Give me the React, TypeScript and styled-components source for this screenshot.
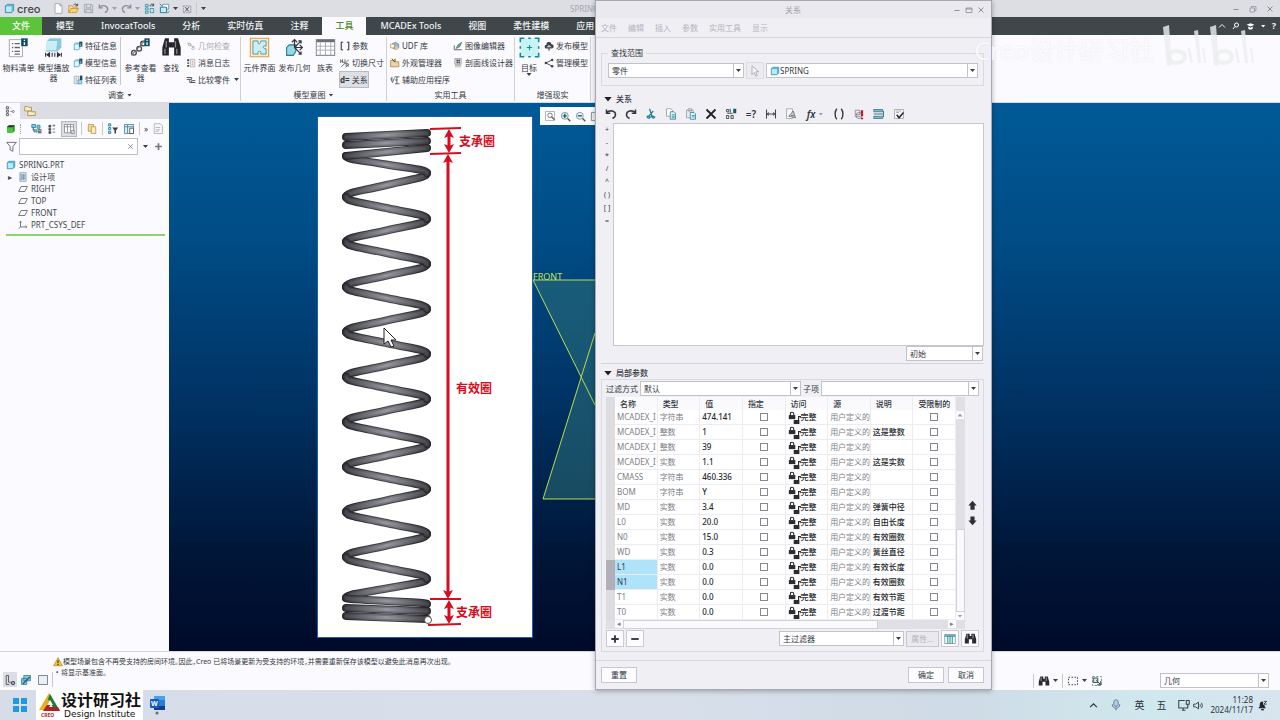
import React from "react";
import styled, { createGlobalStyle } from "styled-components";

interface IconProps {
  name: string;
  size?: number;
}

const DARK = "#3b4248";
const TEAL = "#1b7f96";

const icons: Record<string, React.ReactNode> = {
  cube: (
    <>
      <path d="M2 4l3-2h9v9l-3 3H2z" fill="#59bddb" stroke="#2a7f9e" />
      <path d="M3 5h8v8H3z" fill="#b9ecf8" />
    </>
  ),
  greenCube: (
    <>
      <path d="M2 4l3-2h9v9l-3 3H2z" fill="#2f9a2b" />
      <path d="M2 5h9v9H2z" fill="#4cc43d" />
      <path d="M2 4l3-2h9l-3 3H2z" fill="#333" />
    </>
  ),
  file: <path d="M3 1h7l3 3v11H3zM10 1v3h3" fill="#fff" stroke="#8a8f98" />,
  open: (
    <>
      <path d="M1 14V4h5l1 2h6v3" fill="#f4dc9a" stroke="#b98b2e" />
      <path d="M1 14l3-6h11l-3 6z" fill="#f7d26e" stroke="#b98b2e" />
      <path d="M8 3c2-2 4-2 5 0M14 1v3h-3" fill="none" stroke="#444" strokeWidth="1.4" />
    </>
  ),
  save: <path d="M2 2h11l1 1v11H2zM5 2v5h6V2M4 14V9h8v5" fill="#d4d6dc" stroke="#989ca5" />,
  undo: <path d="M2 6c5-4 12-2 12 3 0 3-2 4-4 5M2 2v5h5" fill="none" stroke="currentColor" strokeWidth="2" />,
  redo: <path d="M14 6C9 2 2 4 2 9c0 3 2 4 4 5M14 2v5H9" fill="none" stroke="currentColor" strokeWidth="2" />,
  regen: (
    <>
      <path d="M2 2h4v3H2zM2 7h4v3H2zM2 12h4v3H2zM9 8h5v6H9z" fill="#bfe8f0" stroke={TEAL} />
      <path d="M9 5c0-4 4-4 5-2M14 1v3h-3" fill="none" stroke={DARK} strokeWidth="1.4" />
    </>
  ),
  windows: (
    <>
      <path d="M5 2h9v7H5z" fill="#fff" stroke="#517a8b" />
      <path d="M2 6h9v8H2z" fill="#c6ebf4" stroke={TEAL} strokeWidth="1.4" />
      <path d="M1 1l3 3M15 12l-3 3" stroke={DARK} />
    </>
  ),
  closeWin: (
    <>
      <path d="M2 3h12v11H2z" fill="none" stroke="#73777f" strokeDasharray="3 1" />
      <path d="M5 5l6 7M11 5l-6 7" stroke="#555" strokeWidth="1.6" />
    </>
  ),
  info: (
    <>
      <path d="M2 5l2-2h7v9l-2 2H2z" fill="#8ed8ea" stroke="#4893a8" />
      <path d="M3 6h6v7H3z" fill="#e0f7fc" />
      <path d="M10 1h5v8h-5z" fill="#0f4f68" />
      <path d="M12 3h1v1h-1zM12 5h1v3h-1z" fill="#fff" />
    </>
  ),
  list: (
    <>
      <path d="M2 2h7v12H2z" fill="#fff" stroke="#848a92" />
      <path d="M4 5h3M4 8h3M4 11h3" stroke="#555" />
      <path d="M8 8h6v6H8z" fill="#a5def0" stroke="#3589a3" />
      <path d="M11 1h4v7h-4z" fill="#0f4f68" />
    </>
  ),
  gearGray: <path d="M2 3l4 1 2 4 5 1M9 12l3-3 2 3-2 2zM3 6l3-3 2 3-2 2z" fill="none" stroke="#b0b3bb" strokeWidth="1.6" />,
  log: (
    <>
      <path d="M2 2h3v3H2zM2 7h3v2H2zM2 11h3v3H2z" fill={DARK} />
      <path d="M7 2h7v12H7z" fill="#fff" stroke="#8d929a" />
      <path d="M9 5h3M9 8h3M9 11h3" stroke="#b3473c" />
    </>
  ),
  compare: <path d="M1 4h8v3H1M6 7v5h9M9 12V9h6" fill="none" stroke="#4c525a" strokeWidth="1.5" />,
  brackets: <path d="M5 2H2v12h3M11 2h3v12h-3" fill="none" stroke={DARK} strokeWidth="1.8" />,
  dims: <path d="M1 2v6M4 2v5h4V2M2 14L14 3M8 9h5v5M10 9v5M1 5h4M9 15l5-5" fill="none" stroke="#51575e" strokeWidth="1.3" />,
  udf: (
    <>
      <path d="M4 4l5-2 5 3v6l-5 3-5-3z" fill="#8fb8df" stroke="#557ba6" />
      <path d="M1 5h6v6H1z" fill="#fff" stroke="#b07b35" />
      <path d="M8 9h5v5H8z" fill="#f1c777" />
    </>
  ),
  appearance: (
    <>
      <path d="M1 4h5l1 2h7v8H1z" fill="#f0d39b" stroke="#8e6f3d" />
      <path d="M3 1l4 5M8 1v5" stroke="#5a4a33" strokeWidth="1.6" />
    </>
  ),
  aux: <path d="M1 5l3 7 3-7M7 3h8M11 3v11M8 14h7M3 3v6M8 8h4" fill="none" stroke="#535960" strokeWidth="1.4" />,
  image: (
    <>
      <path d="M2 7v7h12" fill="none" stroke="#51575e" strokeWidth="1.4" />
      <path d="M5 12l3-6 6-4-3 7z" fill="#69ad9e" stroke="#4b6a68" />
    </>
  ),
  hatch: (
    <>
      <path d="M3 1h10v9H3z" fill="#e6e6ea" stroke="#777" />
      <path d="M5 4h6M5 7h6M7 2v7M10 2v7" stroke="#333" />
      <path d="M3 12h10M3 14h10" stroke="#999" />
    </>
  ),
  cloud: (
    <>
      <path d="M4 12a3 3 0 010-6 4 4 0 018-1 3.500 3.500 0 010 7z" fill={DARK} />
      <path d="M8 15V8M5 10l3-3 3 3" fill="none" stroke="#fff" strokeWidth="1.6" />
      <path d="M8 15v-5" stroke={DARK} strokeWidth="2" />
    </>
  ),
  share: (
    <>
      <path d="M3 8l10-5M3 8l10 5" stroke={DARK} strokeWidth="1.4" />
      <circle cx="3" cy="8" r="2" fill={DARK} />
      <circle cx="13" cy="3" r="2" fill={DARK} />
      <circle cx="13" cy="13" r="2" fill={DARK} />
    </>
  ),
  tree: (
    <>
      <path d="M2 1h3v3H2zM2 6h3v3H2zM2 11h3v3H2z" fill="#fff" stroke="#50565e" strokeWidth="1.3" />
      <path d="M8 8h2M8 3h1M8 13h1" stroke="#50565e" />
      <circle cx="12" cy="8" r="1.500" fill="none" stroke="#50565e" />
    </>
  ),
  folders: <path d="M1 2h4l1 1h4v5H1zM5 8h4l1 1h5v5H5z" fill="#f7eac7" stroke="#b3995a" strokeWidth="1.3" />,
  treeCols: (
    <>
      <path d="M1 2h5v4H1zM4 9h4v3H4zM8 3h4v4H8z" fill="#7fcde0" stroke={TEAL} />
      <path d="M9 9h5M9 11h5M9 13h5M3 6v4" stroke={DARK} strokeWidth="1.3" />
    </>
  ),
  dots: <path d="M3 2h3v3H3zM3 7h3v3H3zM3 12h3v3H3zM9 2h4M9 3h4M9 8h4M9 13h4" fill={DARK} stroke={DARK} />,
  columns: (
    <>
      <path d="M2 2h12v11H2z" fill="#fff" stroke="#7c818b" />
      <path d="M2 5h12M6 2v11M10 2v11" stroke="#7c818b" />
      <path d="M11 10h4v4h-4z" fill="#ddd" stroke="#888" />
    </>
  ),
  model: (
    <>
      <path d="M3 2h7v9H3z" fill="#f7dda1" stroke="#bb8a31" />
      <path d="M7 5h6v9H7z" fill="#fbeccb" stroke="#bb8a31" />
    </>
  ),
  treeFilter: (
    <>
      <path d="M2 1h3v3H2zM2 6h3v3H2zM2 11h3v3H2z" fill="#9bd4e2" stroke={TEAL} />
      <path d="M7 6h8l-3 4v4h-2v-4z" fill={DARK} />
    </>
  ),
  treeList: (
    <>
      <path d="M2 2h12v12H2z" fill="#d4eff5" stroke="#437b8b" />
      <path d="M2 5h12M6 2v12" stroke="#437b8b" />
      <path d="M9 7h5v7H9z" fill="#fff" stroke={DARK} />
    </>
  ),
  page: (
    <>
      <path d="M3 1h8l3 3v10H3z" fill="#f8f8fa" stroke="#a3a6ae" />
      <path d="M5 6h6M5 9h6M5 11h4" stroke="#a3a6ae" />
    </>
  ),
  funnel: <path d="M1 2h14L10 8v7l-4-2V8z" fill="none" stroke="#6d7178" strokeWidth="1.4" />,
  plane: <path d="M5 4h10l-4 8H1z" fill="none" stroke="#596068" strokeWidth="1.3" />,
  csys: <path d="M4 2v9h10M4 11l-3 3M2 4l2-2 2 2M12 9l2 2-2 2" fill="none" stroke="#596068" strokeWidth="1.3" />,
  design: (
    <>
      <path d="M3 1h10v14H3z" fill="#ddeaf2" stroke="#6790aa" />
      <path d="M5 3v10M8 3v10M8 5h4M8 8h4M8 11h4" stroke="#57819b" strokeWidth="1.4" />
    </>
  ),
  zoomFit: (
    <>
      <path d="M2 2h12v12H2z" fill="#fff" stroke="#9ba0a8" />
      <circle cx="8" cy="7" r="3" fill="none" stroke="#555" />
      <path d="M10 9l4 4" stroke="#555" strokeWidth="1.5" />
    </>
  ),
  zoomIn: (
    <>
      <circle cx="7" cy="7" r="5" fill="#e4f4f8" stroke="#60717b" />
      <path d="M4 7h6M7 4v6" stroke="#13657f" strokeWidth="2" />
      <path d="M11 11l4 4" stroke="#555" strokeWidth="2" />
    </>
  ),
  zoomOut: (
    <>
      <circle cx="7" cy="7" r="5" fill="#e4f4f8" stroke="#60717b" />
      <path d="M4 7h6" stroke="#13657f" strokeWidth="2" />
      <path d="M11 11l4 4" stroke="#555" strokeWidth="2" />
    </>
  ),
  cut: <path d="M6 1l3 9M11 4L5 11M3 11a2 2 0 104 1zM9 10a2 2 0 104 2z" fill="none" stroke={TEAL} strokeWidth="1.6" />,
  copy: (
    <>
      <path d="M2 1h6l2 2v8H2z" fill="#fff" stroke="#8d939c" />
      <path d="M7 5h5l2 2v8H7z" fill="#e4f5f9" stroke={TEAL} />
      <path d="M9 9h4M9 11h4M9 13h4" stroke={TEAL} />
    </>
  ),
  paste: (
    <>
      <path d="M2 3h9v10H2zM4 1h5v3H4z" fill="#e9e9ee" stroke="#9297a0" />
      <path d="M7 6h5l2 2v7H7z" fill="#e4f5f9" stroke={TEAL} />
      <path d="M9 10h4M9 12h4" stroke={TEAL} />
    </>
  ),
  del: <path d="M2 2l12 12M14 2L2 14" stroke="#222" strokeWidth="2.400" />,
  dimSwitch: (
    <>
      <path d="M2 2h3v3H2zM2 10h3v4H2zM8 10h3v4H8zM7 1v5M3 7h7" fill="none" stroke="#40464d" strokeWidth="1.2" />
      <path d="M11 1h4v6h-4z" fill="#0f5b64" />
    </>
  ),
  width: <path d="M2 2v12M14 2v12M2 8h12M5 6L3 8l2 2M11 6l2 2-2 2" fill="none" stroke="#40464d" strokeWidth="1.4" />,
  measure: (
    <>
      <path d="M2 1h8v13H2z" fill="#f7f7fa" stroke="#9a9ea6" />
      <path d="M5 11l6-7 3 9zM8 10h4" fill="#c9ccd2" stroke="#5d636b" />
    </>
  ),
  parens: <path d="M5 1c-3 4-3 10 0 14M11 1c3 4 3 10 0 14" fill="none" stroke="#30353b" strokeWidth="1.8" />,
  units: (
    <>
      <path d="M3 3h6v6H3zM2 11h8" fill="#f0f0f4" stroke="#777b84" />
      <circle cx="8" cy="10" r="4" fill="none" stroke="#72767e" />
      <path d="M12 3v8M12 13v2" stroke="#b91c31" strokeWidth="3" />
    </>
  ),
  lines: (
    <>
      <path d="M1 2h12v3H1zM1 11h12v3H1z" fill="#67bfcb" stroke="#41727d" />
      <path d="M1 8h13V4M14 8v4" fill="none" stroke="#41727d" strokeWidth="1.3" />
    </>
  ),
  verify: (
    <>
      <path d="M2 2h12v12H2z" fill="#f7f7fa" stroke="#9a9ea6" />
      <path d="M4 4h7M4 6h4" stroke="#9a9ea6" />
      <path d="M5 9l3 4 6-7" fill="none" stroke="#22272c" strokeWidth="2" />
    </>
  ),
  arrowPtr: <path d="M4 1v12l3-3 2 5 2-1-2-5h4z" fill="#f5f5f8" stroke="#9b9ea8" />,
  binoculars: (
    <>
      <path d="M3 2h4v3h2V2h4l2 7v5h-5V9H6v5H1V9z" fill="#2a2b2d" />
      <path d="M4 3v5M11 3v5" stroke="#8f9194" strokeWidth="1.4" />
    </>
  ),
  tableCols: (
    <>
      <path d="M1 2h14v12H1z" fill="#fff" stroke="#7c818b" />
      <path d="M1 4h14" stroke="#2b9aa0" strokeWidth="2" />
      <path d="M5 4v10M8 4v10M11 4v10" stroke="#2b9aa0" strokeWidth="1.5" />
    </>
  ),
  treeToggle: (
    <>
      <path d="M3 2v12h4M3 2h3M6 2v9M6 11h3" fill="none" stroke="#575d65" strokeWidth="1.3" />
      <circle cx="12" cy="12" r="2" fill="none" stroke="#333" strokeWidth="1.500" />
    </>
  ),
  browser: (
    <>
      <path d="M5 2h9v7H5zM2 6h7v8H2z" fill="#7cc6e2" stroke="#317d9b" />
      <path d="M4 13l9-9" stroke="#1d5a76" strokeWidth="1.5" />
    </>
  ),
  blank: <path d="M2 2h12v12H2z" fill="#eaf0f7" stroke="#7b8591" strokeWidth="1.3" />,
  dashed: <path d="M2 3h12v10H2z" fill="none" stroke="#3c4147" strokeWidth="1.4" strokeDasharray="2 2" />,
  select3d: (
    <>
      <path d="M2 2h12v12H2z" fill="none" stroke="#2f8c80" strokeDasharray="3 2" />
      <path d="M3 4h6v6H3zM7 7l6 6M13 8v5H8" fill="#cfe9e7" stroke="#333b40" strokeWidth="1.2" />
    </>
  ),
  warn: (
    <>
      <path d="M8 1l7 13H1z" fill="#f5c83b" stroke="#a07a10" />
      <path d="M8 5v5M8 11v2" stroke="#3a2c00" strokeWidth="1.800" />
    </>
  ),
  search: <path d="M9 2a4 4 0 110 8 4 4 0 010-8zM6 9l-4 5" fill="none" stroke="#fff" strokeWidth="2" />,
  school: <path d="M1 5l7-3 7 3-7 3zM4 8v4c2 2 6 2 8 0V8l-4 2z" fill="#fff" />,
  caretUp: <path d="M2 11l6-6 6 6" fill="none" stroke="currentColor" strokeWidth="2" />,
  mic: (
    <>
      <rect x="5" y="1" width="6" height="9" rx="3" fill="#aecbe9" stroke="#55708e" />
      <path d="M3 7c0 7 10 7 10 0M8 12v3" fill="none" stroke="#55708e" strokeWidth="1.2" />
    </>
  ),
  network: (
    <>
      <path d="M9 2H1v10h12V9M5 15h5M7 12v3" fill="none" stroke="#3b4550" strokeWidth="1.4" />
      <path d="M11 2h4v5h-4zM13 7v3" fill="none" stroke="#3b4550" strokeWidth="1.4" />
    </>
  ),
  speaker: <path d="M1 6h3l4-3v10l-4-3H1zM10 6c1 1 1 3 0 4M12 4c2 2 2 6 0 8" fill="none" stroke="#3b4550" strokeWidth="1.4" />,
  bell: (
    <>
      <path d="M2 12h11l-2-3V6c0-5-7-5-7 0v3z" fill="#20262c" />
      <path d="M6 14h4" stroke="#20262c" strokeWidth="2" />
      <path d="M9 1h6v6H9z" fill="#dbe9f2" />
      <path d="M10 2h4l-4 4h4" fill="none" stroke="#20262c" strokeWidth="1.200" />
    </>
  ),
  min: <path d="M3 9h10" stroke="currentColor" strokeWidth="1.800" />,
  max: <path d="M2 4h12v9H2zM2 6h12" fill="none" stroke="currentColor" strokeWidth="1.5" />,
  restore: <path d="M2 6h9v8H2zM5 6V3h9v8h-3" fill="none" stroke="currentColor" strokeWidth="1.3" />,
  close: <path d="M3 3l10 10M13 3L3 13" stroke="currentColor" strokeWidth="1.800" />,
  plus: <path d="M8 2v12M2 8h12" stroke="currentColor" strokeWidth="3" />,
  minus: <path d="M2 8h12" stroke="currentColor" strokeWidth="3" />,
  arrowUp: <path d="M8 1l6 7h-3v6H5V8H2z" fill="#2d3034" />,
  arrowDown: <path d="M8 15l6-7h-3V2H5v6H2z" fill="#2d3034" />,
  locks: (
    <>
      <path d="M1 5h8v5H1z" fill="#2a2c2f" />
      <path d="M3 5V3c0-2 4-2 4 0v2" fill="none" stroke="#2a2c2f" strokeWidth="1.400" />
      <path d="M7 11h7v5H7z" fill="#2a2c2f" />
      <path d="M13 11V7h3v2" fill="none" stroke="#2a2c2f" strokeWidth="1.400" />
    </>
  ),
  // large ribbon drawings
  bom: (
    <>
      <path d="M1 2h10v13H1z" fill="#fff" stroke="#a0a5ad" strokeWidth=".7" />
      <path d="M3 5h1M3 8h1M3 11h1M5 5h4M5 8h4M5 11h4M5 13h4" stroke="#5d6570" />
      <path d="M10 1h5v6h-5z" fill="#0f4f68" />
      <path d="M12 2h1v1h-1zM12 4h1v2h-1z" fill="#fff" />
    </>
  ),
  player: (
    <>
      <path d="M3 3l2-2h9v7l-3 3H2z" fill="#8bc9da" />
      <path d="M3 3h8l-1 7H2z" fill="#c9eef6" />
      <path d="M2 12v3M5 12v3l-2-1.500zM7 12v3M9 12v3M11 12v3l2-1.500zM14 12v3" stroke="#2d3136" strokeWidth=".8" fill="#2d3136" />
    </>
  ),
  refs: (
    <>
      <circle cx="3" cy="12" r="1.800" fill="none" stroke="#444" />
      <circle cx="7" cy="9" r="1.800" fill="none" stroke="#444" />
      <circle cx="10" cy="5" r="1.800" fill="none" stroke="#444" />
      <path d="M1 14l11-12" stroke="#777" strokeWidth=".8" />
      <path d="M11 1h4v6h-4z" fill="#0f4f68" />
      <path d="M13 2v1M13 4v2" stroke="#fff" />
    </>
  ),
  find: (
    <>
      <path d="M3 1h3v3h4V1h3l2 7v6h-5V8H6v6H1V8z" fill="#252629" />
      <path d="M4 3v5M11 3v5M3 9v4M12 9v4" stroke="#85878b" />
    </>
  ),
  compUi: (
    <>
      <path d="M1 1h14v14H1z" fill="#fde8c8" stroke="#d99b4a" strokeWidth=".8" />
      <path d="M3 3h4c-1 3 2 3 2 0h4v4c-3-1-3 2 0 2v4H9c1-3-3-3-2 0H3z" fill="#cdeef5" stroke="#4a98ac" strokeWidth=".7" />
    </>
  ),
  publish: (
    <>
      <path d="M2 8l2-2h5v5l-2 3H2z" fill="#8fdbe8" stroke="#2d7588" strokeWidth=".8" />
      <path d="M8 8V2M8 8h6M8 8l5-5M8 8l5 5M6 4l2-2 2 2M12 6l2 2-2 2M11 3h2v2M13 11v2h-2" fill="none" stroke="#2f353b" strokeWidth=".9" />
    </>
  ),
  family: (
    <>
      <path d="M1 2h14v12H1z" fill="#fff" stroke="#8b9098" strokeWidth=".8" />
      <path d="M1 2h14v2H1z" fill="#697079" />
      <path d="M1 7h14M1 10h14M4 4v10M8 4v10M12 4v10" stroke="#a5a9b1" strokeWidth=".7" />
    </>
  ),
  target: (
    <>
      <path d="M1 1h14v14H1z" fill="#c7f3f4" />
      <path d="M1 4V1h3M7 1h2M12 1h3v3M15 7v2M15 12v3h-3M9 15H7M4 15H1v-3M1 9V7" fill="none" stroke="#128c95" strokeWidth="1.200" />
      <path d="M8 6v4M6 8h4" stroke="#128c95" strokeWidth=".8" />
    </>
  ),
};

const Icon: React.FC<IconProps> = ({ name, size = 11 }) => (
  <Svg viewBox="0 0 16 16" width={size} height={size} aria-hidden="true">
    {icons[name]}
  </Svg>
);

interface SelectProps {
  value: string;
  label: string;
  width?: number;
  icon?: string;
}

const Select: React.FC<SelectProps> = ({ value, label, width, icon }) => (
  <SelectBox $w={width}>
    {icon && <Icon name={icon} size={10} />}
    <select aria-label={label} defaultValue={value}>
      <option>{value}</option>
    </select>
    <SelectArrow>
      <Caret />
    </SelectArrow>
  </SelectBox>
);

interface Small {
  icon?: string;
  text: string;
  glyph?: string;
  caret?: boolean;
  off?: boolean;
  on?: boolean;
}

const SmallItems = ({ items }: { items: Small[] }) => (
  <SmallColumn>
    {items.map((item) => (
      <SmallButton key={item.text} $off={item.off} $on={item.on}>
        {item.icon ? <Icon name={item.icon} size={10} /> : <Glyph>{item.glyph}</Glyph>}
        {item.text}
        {item.caret && <Caret />}
      </SmallButton>
    ))}
  </SmallColumn>
);

const BigItem = ({ icon, text, narrow, caret }: { icon: string; text: string; narrow?: boolean; caret?: boolean }) => (
  <BigButton $narrow={narrow}>
    <Icon name={icon} size={21} />
    <span>{text}</span>
    {caret && <Caret />}
  </BigButton>
);

const tabs = ["模型", "InvocatTools", "分析", "实时仿真", "注释", "工具", "MCADEx Tools", "视图", "柔性建模", "应用"];

const menus = ["文件", "编辑", "插入", "参数", "实用工具", "显示"];

const operators = ["+", "-", "*", "/", "^", "( )", "[ ]", "="];

const rows = [
  ["MCADEX_I", "字符串", "474.141", ""],
  ["MCADEX_I", "整数", "1", "这是整数"],
  ["MCADEX_I", "整数", "39", ""],
  ["MCADEX_I", "实数", "1.1", "这是实数"],
  ["CMASS", "字符串", "460.336", ""],
  ["BOM", "字符串", "Y", ""],
  ["MD", "实数", "3.4", "弹簧中径"],
  ["L0", "实数", "20.0", "自由长度"],
  ["N0", "实数", "15.0", "有效圈数"],
  ["WD", "实数", "0.3", "簧丝直径"],
  ["L1", "实数", "0.0", "有效长度"],
  ["N1", "实数", "0.0", "有效圈数"],
  ["T1", "实数", "0.0", "有效节距"],
  ["T0", "实数", "0.0", "过渡节距"],
];

// one entry per half turn: [x, y] of the bend
const bends: number[][] = [
  [346, 156],
  [427, 173],
];
for (let i = 0; i < 9; i++) {
  bends.push([346, 197 + i * 45], [427, 219 + i * 45]);
}
bends.push([346, 598], [427, 604]);

const strands = bends.slice(1).map(([x, y], i) => {
  const [px, py] = bends[i];
  const dy = y - py;
  const mx = (px + x) / 2;
  const my = (py + y) / 2;
  const side = x > px ? 26 : -26;
  return `M${px} ${py}C${px} ${py + dy * 0.2} ${mx - side} ${my - dy * 0.26} ${mx} ${my}S${x} ${y - dy * 0.2} ${x} ${y}`;
});

const endCoils = ["M346 156L427 148", "M346 145L427 141", "M346 137L427 133", "M346 608L427 611", "M346 616L427 619"];

const Wire = ({ d }: { d: string }) => (
  <g fill="none" strokeLinecap="round">
    <path d={d} stroke="url(#edge)" strokeWidth="8" />
    <path d={d} stroke="url(#wire)" strokeWidth="6" />
    <path d={d} stroke="url(#shine)" strokeWidth="3" />
  </g>
);

const SpringDrawing = () => (
  <SpringSvg viewBox="318 117 214 520" role="img" aria-label="弹簧">
    <defs>
      <linearGradient id="edge" gradientUnits="userSpaceOnUse" x1="341" x2="432" y1="0" y2="0">
        <stop offset="0" stopColor="#1f1f24" />
        <stop offset="0.5" stopColor="#47474d" />
        <stop offset="1" stopColor="#1f1f24" />
      </linearGradient>
      <linearGradient id="wire" gradientUnits="userSpaceOnUse" x1="341" x2="432" y1="0" y2="0">
        <stop offset="0" stopColor="#2c2c32" />
        <stop offset="0.3" stopColor="#6a6a72" />
        <stop offset="0.6" stopColor="#77777f" />
        <stop offset="1" stopColor="#303036" />
      </linearGradient>
      <linearGradient id="shine" gradientUnits="userSpaceOnUse" x1="341" x2="432" y1="0" y2="0">
        <stop offset="0" stopColor="#3f3f46" />
        <stop offset="0.5" stopColor="#96969e" />
        <stop offset="1" stopColor="#3f3f46" />
      </linearGradient>
    </defs>
    {strands.filter((_, i) => i % 2 === 1).map((d) => <Wire key={d} d={d} />)}
    {strands.filter((_, i) => i % 2 === 0).map((d) => <Wire key={d} d={d} />)}
    {endCoils.map((d) => <Wire key={d} d={d} />)}
    <circle cx="428" cy="620" r="3.500" fill="#fff" stroke="#555" />
    <g stroke="#d40d20" strokeWidth="2" fill="#d40d20">
      <path d="M430 129l31-1M430 154l31-1M430 599h31M428 625l33-1" />
      <path d="M449 133v16M449 604v16" strokeWidth="3" />
      <path d="M448 160v434" strokeWidth="3" />
      <g stroke="none">
        <path d="M449 129l5 9-5-2-5 2zM449 153l5-9-5 2-5-2z" />
        <path d="M448 154l5 9-5-2-5 2zM448 599l5-9-5 2-5-2z" />
        <path d="M449 600l5 9-5-2-5 2zM449 624l5-9-5 2-5-2z" />
      </g>
    </g>
    <g fill="#d40d20" fontSize="12" fontWeight="700">
      <text x="459" y="146">支承圈</text>
      <text x="456" y="393">有效圈</text>
      <text x="456" y="617">支承圈</text>
    </g>
    <path d="M384 328v16l4-3 3 6 3-1-3-6h5z" fill="#fff" stroke="#222" />
  </SpringSvg>
);

const RelationsDialog = () => (
  <Dialog role="dialog" aria-label="关系">
    <DialogTitle>
      <span>关系</span>
      <WindowButtons $gap={4}>
        <button aria-label="最小化"><Icon name="min" size={8} /></button>
        <button aria-label="最大化"><Icon name="max" size={8} /></button>
        <button aria-label="关闭"><Icon name="close" size={8} /></button>
      </WindowButtons>
    </DialogTitle>
    <MenuBar>
      {menus.map((m) => <button key={m}>{m}</button>)}
    </MenuBar>
    <DialogBody>
      <Scope>
        <legend>查找范围</legend>
        <Row>
          <Select label="类型" value="零件" width={136} />
          <IconButton $off aria-label="选取"><Icon name="arrowPtr" size={12} /></IconButton>
          <Select label="模型" value="SPRING" icon="cube" />
        </Row>
      </Scope>
      <SectionTitle><Triangle />关系</SectionTitle>
      <EditorTools>
        {["undo", "redo", "cut", "copy", "paste", "del", "dimSwitch"].map((n) => (
          <ToolButton key={n} aria-label={n}><Icon name={n} size={12} /></ToolButton>
        ))}
        <ToolButton><b>=?</b></ToolButton>
        <ToolButton aria-label="width"><Icon name="width" size={12} /></ToolButton>
        <ToolButton aria-label="measure"><Icon name="measure" size={12} /></ToolButton>
        <ToolButton $wide><i>fx</i><Caret $dim /></ToolButton>
        {["parens", "units", "lines", "verify"].map((n) => (
          <ToolButton key={n} aria-label={n}><Icon name={n} size={12} /></ToolButton>
        ))}
      </EditorTools>
      <Editor>
        <Operators>
          {operators.map((o) => <button key={o}>{o}</button>)}
        </Operators>
        <textarea aria-label="关系" spellCheck={false} />
      </Editor>
      <InitialRow>
        <Select label="初始" value="初始" width={77} />
      </InitialRow>
      <SectionTitle><Triangle />局部参数</SectionTitle>
      <ParamBox>
        <FilterRow>
          <span>过滤方式</span>
          <Select label="过滤方式" value="默认" width={161} />
          <span>子项</span>
          <Select label="子项" value="" />
        </FilterRow>
        <TableArea>
          <TableColumn>
            <TableRow>
              <ParamTable>
                <colgroup>
                  <col style={{ width: 9 }} />
                  {[1, 2, 3, 4, 5, 6, 7, 8].map((c) => <col key={c} />)}
                </colgroup>
                <thead>
                  <tr>
                    <th aria-label="行" />
                    {["名称", "类型", "值", "指定", "访问", "源", "说明", "受限制的"].map((h) => (
                      <th key={h}>{h}</th>
                    ))}
                  </tr>
                </thead>
                <tbody>
                  {rows.map(([name, type, value, note], i) => {
                    const selected = name === "L1" || name === "N1";
                    return (
                      <Param key={i} $selected={selected}>
                        <td />
                        <td>{name}</td>
                        <td>{type}</td>
                        <Strong>{value}</Strong>
                        <Centered><input type="checkbox" aria-label={`指定 ${name}`} /></Centered>
                        <Strong><Access><Icon name="locks" size={13} />完整</Access></Strong>
                        <td>用户定义的</td>
                        <Strong>{note}</Strong>
                        <Centered><input type="checkbox" aria-label={`受限制的 ${name}`} /></Centered>
                      </Param>
                    );
                  })}
                </tbody>
              </ParamTable>
              <VScroll>
                <ScrollCap><Caret $up $dim /></ScrollCap>
                <VThumb />
                <ScrollCap><Caret $dim /></ScrollCap>
              </VScroll>
            </TableRow>
            <HScroll>
              <ScrollCap>◂</ScrollCap>
              <HThumb />
              <ScrollCap>▸</ScrollCap>
            </HScroll>
          </TableColumn>
          <MoveButtons>
            <button aria-label="上移"><Icon name="arrowUp" size={11} /></button>
            <button aria-label="下移"><Icon name="arrowDown" size={11} /></button>
          </MoveButtons>
        </TableArea>
        <ParamFooter>
          <IconButton aria-label="添加"><Icon name="plus" size={10} /></IconButton>
          <IconButton aria-label="删除"><Icon name="minus" size={10} /></IconButton>
          <Spacer />
          <Select label="过滤器" value="主过滤器" width={125} />
          <PushButton $off disabled>属性...</PushButton>
          <IconButton aria-label="列"><Icon name="tableCols" size={12} /></IconButton>
          <IconButton aria-label="查找"><Icon name="binoculars" size={13} /></IconButton>
        </ParamFooter>
      </ParamBox>
    </DialogBody>
    <DialogFooter>
      <PushButton>重置</PushButton>
      <Spacer />
      <PushButton>确定</PushButton>
      <PushButton>取消</PushButton>
    </DialogFooter>
  </Dialog>
);

const App: React.FC = () => {
  return (
    <>
      <GlobalStyle />
      <Screen>
        <TitleBar>
          <Brand><Icon name="cube" size={11} />creo</Brand>
          <QuickTools>
            <button aria-label="新建"><Icon name="file" /></button>
            <button aria-label="打开"><Icon name="open" /></button>
            <button aria-label="保存"><Icon name="save" /></button>
            <button aria-label="撤消"><Icon name="undo" /><Caret $dim /></button>
            <button aria-label="重做"><Icon name="redo" /><Caret $dim /></button>
            <button aria-label="重新生成"><Icon name="regen" /></button>
            <button aria-label="窗口"><Icon name="windows" /><Caret /></button>
            <button aria-label="关闭窗口"><Icon name="closeWin" size={10} /></button>
            <Divider $h={13} />
            <button aria-label="自定义"><Caret /></button>
          </QuickTools>
          <DocTitle>SPRING</DocTitle>
          <WindowButtons $gap={9}>
            <button aria-label="最小化"><Icon name="min" size={8} /></button>
            <button aria-label="还原"><Icon name="restore" size={8} /></button>
            <button aria-label="关闭"><Icon name="close" size={8} /></button>
          </WindowButtons>
        </TitleBar>

        <TabBar>
          <FileTab>文件</FileTab>
          {tabs.map((t) => <Tab key={t} $active={t === "工具"}>{t}</Tab>)}
          <Spacer />
          <TabTools>
            <button aria-label="折叠"><Icon name="caretUp" size={8} /></button>
            <button aria-label="搜索"><Icon name="search" size={8} /></button>
            <button aria-label="学习"><Icon name="school" size={9} /></button>
            <button aria-label="更多"><Caret $light /></button>
            <button><b>?</b></button>
          </TabTools>
        </TabBar>

        <Ribbon>
          <Group $w={240}>
            <GroupBody>
              <BigItem icon="bom" text="物料清单" />
              <BigItem icon="player" text="模型播放器" />
              <SmallItems
                items={[
                  { icon: "info", text: "特征信息" },
                  { icon: "info", text: "模型信息" },
                  { icon: "list", text: "特征列表" },
                ]}
              />
              <Divider $h={48} />
              <BigItem icon="refs" text="参考查看器" />
              <BigItem icon="find" text="查找" narrow />
              <SmallItems
                items={[
                  { icon: "gearGray", text: "几何检查", off: true },
                  { icon: "log", text: "消息日志" },
                  { icon: "compare", text: "比较零件", caret: true },
                ]}
              />
            </GroupBody>
            <GroupLabel>调查<Caret /></GroupLabel>
          </Group>
          <Group $w={146}>
            <GroupBody>
              <BigItem icon="compUi" text="元件界面" />
              <BigItem icon="publish" text="发布几何" />
              <BigItem icon="family" text="族表" narrow />
              <SmallItems
                items={[
                  { icon: "brackets", text: "参数" },
                  { icon: "dims", text: "切换尺寸" },
                  { glyph: "d=", text: "关系", on: true },
                ]}
              />
            </GroupBody>
            <GroupLabel>模型意图<Caret /></GroupLabel>
          </Group>
          <Group $w={128}>
            <GroupBody>
              <SmallItems
                items={[
                  { icon: "udf", text: "UDF 库" },
                  { icon: "appearance", text: "外观管理器" },
                  { icon: "aux", text: "辅助应用程序" },
                ]}
              />
              <SmallItems
                items={[
                  { icon: "image", text: "图像编辑器" },
                  { icon: "hatch", text: "剖面线设计器" },
                ]}
              />
            </GroupBody>
            <GroupLabel>实用工具</GroupLabel>
          </Group>
          <Group $w={76}>
            <GroupBody>
              <BigItem icon="target" text="目标" narrow caret />
              <SmallItems
                items={[
                  { icon: "cloud", text: "发布模型" },
                  { icon: "share", text: "管理模型" },
                ]}
              />
            </GroupBody>
            <GroupLabel>增强现实</GroupLabel>
          </Group>
        </Ribbon>

        <Main>
          <SidePanel>
            <SideTabs>
              <SideTab $active aria-label="模型树"><Icon name="tree" /></SideTab>
              <SideTab aria-label="文件夹"><Icon name="folders" size={12} /></SideTab>
            </SideTabs>
            <SideTools>
              <button aria-label="模型"><Icon name="greenCube" size={10} /></button>
              <Divider $h={10} $dots />
              <Spacer />
              <button aria-label="树"><Icon name="treeCols" size={12} /></button>
              <button aria-label="展开"><Icon name="dots" size={10} /></button>
              <SideToggle aria-label="列"><Icon name="columns" size={12} /></SideToggle>
              <Divider $h={13} />
              <button aria-label="模型集"><Icon name="model" size={12} /></button>
              <Divider $h={13} />
              <button aria-label="过滤树"><Icon name="treeFilter" size={12} /></button>
              <button aria-label="树列"><Icon name="treeList" size={12} /></button>
              <Divider $h={13} />
              <button>»</button>
              <button aria-label="设置"><Icon name="page" size={12} /></button>
            </SideTools>
            <SearchRow>
              <Icon name="funnel" size={11} />
              <SearchBox>
                <input type="text" aria-label="过滤" />
                <button aria-label="清除"><Icon name="close" size={7} /></button>
              </SearchBox>
              <button aria-label="选项"><Caret /></button>
              <button aria-label="添加"><Icon name="plus" size={9} /></button>
            </SearchRow>
            <Tree>
              <TreeRoot><Icon name="cube" size={10} />SPRING.PRT</TreeRoot>
              <TreeItem><i>▸</i><Icon name="design" size={10} />设计项</TreeItem>
              <TreeItem><i /><Icon name="plane" size={10} />RIGHT</TreeItem>
              <TreeItem><i /><Icon name="plane" size={10} />TOP</TreeItem>
              <TreeItem><i /><Icon name="plane" size={10} />FRONT</TreeItem>
              <TreeItem><i /><Icon name="csys" size={10} />PRT_CSYS_DEF</TreeItem>
            </Tree>
            <InsertLine />
          </SidePanel>

          <Canvas>
            <PlaneSvg viewBox="533 268 62 234" width="62" height="234">
              <path d="M533 280h62v219h-52l38-122z" fill="#2b6f78" fillOpacity=".55" />
              <path d="M595 280h-62l62 125M595 333l-52 166h52" fill="none" stroke="#b9dc4c" />
              <text x="533" y="280" fill="#c5e04f" fontSize="9">FRONT</text>
            </PlaneSvg>
            <SceneTools>
              <button aria-label="重新调整"><Icon name="zoomFit" size={12} /></button>
              <button aria-label="放大"><Icon name="zoomIn" size={11} /></button>
              <button aria-label="缩小"><Icon name="zoomOut" size={11} /></button>
              <button aria-label="重画"><Icon name="blank" size={11} /></button>
            </SceneTools>
            <Sheet>
              <SpringDrawing />
            </Sheet>
          </Canvas>
        </Main>

        <StatusBar>
          <StatusTools>
            <StatusToggle $on aria-label="导航器"><Icon name="treeToggle" size={12} /></StatusToggle>
            <StatusToggle aria-label="浏览器"><Icon name="browser" size={12} /></StatusToggle>
            <StatusToggle aria-label="全屏"><Icon name="blank" size={12} /></StatusToggle>
            <Divider $h={15} />
          </StatusTools>
          <Messages>
            <p>
              <Icon name="warn" size={10} />
              模型场景包含不再受支持的房间环境。因此，Creo 已将场景更新为受支持的环境，并需要重新保存该模型以避免此消息再次出现。
            </p>
            <p><em>•</em>将显示基准面。</p>
          </Messages>
          <StatusRight>
            <Divider $h={14} />
            <button aria-label="查找"><Icon name="binoculars" size={12} /><Caret /></button>
            <Divider $h={14} />
            <button aria-label="框选"><Icon name="dashed" size={12} /><Caret /></button>
            <button aria-label="三维选择"><Icon name="select3d" size={12} /></button>
            <Spacer />
            <Select label="选择过滤器" value="几何" width={109} />
          </StatusRight>
        </StatusBar>

        <Taskbar>
          <StartButton aria-label="开始">
            <svg viewBox="0 0 14 14" width="14" height="14">
              <path d="M0 0h6v6H0zM8 0h6v6H8zM0 8h6v6H0zM8 8h6v6H8z" fill="#1e9be0" />
            </svg>
          </StartButton>
          <Badge>
            <svg viewBox="0 0 22 24" width="22" height="24">
              <path d="M10 0L0 17h5l8-13z" fill="#e2b21e" />
              <path d="M11 1l10 17h-5L9 6z" fill="#1f7a3b" />
              <path d="M2 18h19l-2-4H10l3-4-2-3-7 11z" fill="#b21f24" />
              <path d="M8 12l3-5 3 5z" fill="#fff" />
              <text x="2" y="24" fontSize="5" fontWeight="700" fill="#b21f24">CREO</text>
            </svg>
            <div>
              <strong>设计研习社</strong>
              <small>Design Institute</small>
            </div>
          </Badge>
          <WordButton aria-label="Word">
            <svg viewBox="0 0 16 20" width="16" height="20">
              <path d="M4 1h11v14H4z" fill="#2b7cd3" />
              <path d="M4 1h11v4H4z" fill="#41a5ee" />
              <path d="M4 11h11v4H4z" fill="#103f91" />
              <rect x="0" y="4" width="9" height="9" rx="1" fill="#185abd" />
              <text x="1" y="11" fontSize="7" fontWeight="700" fill="#fff">W</text>
              <circle cx="7" cy="18" r="1.500" fill="#646a74" />
            </svg>
          </WordButton>
          <Spacer />
          <Tray>
            <button aria-label="隐藏的图标"><Icon name="caretUp" size={9} /></button>
            <button aria-label="麦克风"><Icon name="mic" size={12} /></button>
            <button>英</button>
            <button>五</button>
            <TrayPair><Icon name="network" size={12} /><Icon name="speaker" size={11} /></TrayPair>
            <Clock>
              <time>11:28</time>
              <time>2024/11/17</time>
            </Clock>
            <button aria-label="通知"><Icon name="bell" size={11} /></button>
          </Tray>
        </Taskbar>

        <RelationsDialog />

        <Watermark>
          <span>Creo设计研习社</span>
          <svg viewBox="0 0 96 46" width="96" height="46">
            <g fill="#ecedee" fillOpacity=".8">
              <path d="M1 4l6-2 3 40-5 1zM48 4l6-2 3 40-5 1z" />
              <path d="M32 8l4-1 3 33h-3zM79 8l4-1 3 33h-3z" />
              <path d="M26 25h2l3 15h-3zM40 25h2l2 15h-2zM73 25h2l3 15h-3zM88 25h2l2 15h-2z" />
            </g>
            <g fill="none" stroke="#ecedee" strokeOpacity=".8" strokeWidth="4">
              <ellipse cx="15" cy="34" rx="8" ry="6" />
              <ellipse cx="62" cy="34" rx="8" ry="6" />
            </g>
          </svg>
        </Watermark>
      </Screen>
    </>
  );
};

export default App;

const GlobalStyle = createGlobalStyle`
  * {
    box-sizing: border-box;
  }

  body {
    margin: 0;
    overflow: hidden;
    font-family: "Noto Sans", "Noto Sans CJK SC", sans-serif;
    font-size: 8px;
    line-height: 12px;
    color: #33383e;
  }

  button, input, select, textarea {
    margin: 0;
    padding: 0;
    border: 0;
    background: none;
    font: inherit;
    color: inherit;
  }

  button {
    display: flex;
    align-items: center;
    justify-content: center;
    white-space: nowrap;
  }
`;

const Svg = styled.svg`
  display: block;
  flex: none;
`;

const Caret = styled.span<{ $dim?: boolean; $light?: boolean; $up?: boolean }>`
  flex: none;
  width: 5px;
  height: 3px;
  background: ${({ $dim, $light }) => ($light ? "#fff" : $dim ? "#9a9da5" : "#3a3f45")};
  clip-path: ${({ $up }) => ($up ? "polygon(50% 0, 100% 100%, 0 100%)" : "polygon(0 0, 100% 0, 50% 100%)")};
`;

const Triangle = styled.span`
  width: 8px;
  height: 5px;
  background: #1c1e21;
  clip-path: polygon(0 0, 100% 0, 50% 100%);
`;

const Spacer = styled.div`
  flex: 1;
`;

const Divider = styled.span<{ $h: number; $dots?: boolean }>`
  flex: none;
  width: 1px;
  height: ${({ $h }) => $h}px;
  border-left: 1px ${({ $dots }) => ($dots ? "dotted #9a9da5" : "solid #c6c7cf")};
`;

const Row = styled.div`
  display: flex;
  align-items: center;
  gap: 2px;
`;

const Screen = styled.div`
  position: relative;
  min-height: 100vh;
  display: flex;
  flex-direction: column;
  overflow: hidden;
  background: #fbfafe;
`;

const TitleBar = styled.header`
  height: 17px;
  padding: 0 6px 0 4px;
  display: flex;
  align-items: center;
  background: #dcdee4;
`;

const Brand = styled.div`
  width: 49px;
  display: flex;
  align-items: center;
  gap: 2px;
  font-family: Inter, sans-serif;
  font-size: 11px;
  font-weight: 500;
  color: #3f444b;
`;

const QuickTools = styled.div`
  display: flex;
  align-items: center;
  gap: 4px;
  color: #8a8e96;

  button {
    gap: 3px;
  }
`;

const DocTitle = styled.div`
  flex: 1;
  padding-left: 364px;
  color: #a5a7ae;
`;

const WindowButtons = styled.div<{ $gap: number }>`
  display: flex;
  gap: ${({ $gap }) => $gap}px;
  color: #85878f;
`;

const TabBar = styled.nav`
  height: 18px;
  display: flex;
  gap: 1px;
  background: #40474b;
  font-size: 9px;
  font-weight: 500;
  color: #f1f2f3;
`;

const FileTab = styled.button`
  width: 42px;
  background: #5cc43a;
  color: #fff;
`;

const Tab = styled.button<{ $active?: boolean }>`
  padding: 0 13px;
  background: ${({ $active }) => ($active ? "#fbfafe" : "transparent")};
  color: ${({ $active }) => ($active ? "#4d8a2c" : "inherit")};
`;

const TabTools = styled.div`
  display: flex;
  align-items: center;
  gap: 6px;
  padding-right: 4px;
`;

const Ribbon = styled.section`
  height: 68px;
  display: flex;
  padding-top: 2px;
  border-bottom: 1px solid #d8d9e0;
`;

const Group = styled.div<{ $w: number }>`
  flex: 0 0 ${({ $w }) => $w}px;
  height: 64px;
  display: flex;
  flex-direction: column;
  border-right: 1px solid #cfd0d8;
`;

const GroupBody = styled.div`
  flex: 1;
  display: flex;
  padding-left: 1px;

  > ${Divider} {
    margin: 0 2px;
  }
`;

const GroupLabel = styled.div`
  display: flex;
  align-items: center;
  justify-content: center;
  gap: 3px;
`;

const BigButton = styled.button<{ $narrow?: boolean }>`
  width: ${({ $narrow }) => ($narrow ? 26 : 35)}px;
  height: 50px;
  flex-direction: column;
  justify-content: flex-start;
  white-space: normal;
  line-height: 10px;

  svg {
    margin-bottom: 5px;
  }
`;

const SmallColumn = styled.div`
  display: flex;
  flex-direction: column;
  margin-left: 1px;
`;

const SmallButton = styled.button<{ $off?: boolean; $on?: boolean }>`
  align-self: flex-start;
  height: 17px;
  padding: 0 1px;
  gap: 2px;
  color: ${({ $off }) => ($off ? "#a9abb3" : "inherit")};
  background: ${({ $on }) => ($on ? "#dedfe5" : "transparent")};
  box-shadow: ${({ $on }) => ($on ? "inset 0 0 0 1px #b9bac4" : "none")};

  ${Caret} {
    margin-left: 2px;
  }
`;

const Glyph = styled.b`
  font-size: 8px;
`;

const Main = styled.main`
  flex: 1;
  display: flex;
`;

const SidePanel = styled.aside`
  flex: 0 0 169px;
  min-width: 0;
  display: flex;
  flex-direction: column;
`;

const SideTabs = styled.div`
  height: 16px;
  display: flex;
  background: #dcdde3;
`;

const SideTab = styled.button<{ $active?: boolean }>`
  width: 20px;
  background: ${({ $active }) => ($active ? "#fbfafe" : "transparent")};
`;

const SideTools = styled.div`
  height: 19px;
  padding: 0 5px 0 6px;
  display: flex;
  align-items: center;
  gap: 4px;
`;

const SideToggle = styled.button`
  width: 16px;
  height: 16px;
  background: #dddee5;
  border: 1px solid #b4b6c0;
`;

const SearchRow = styled.div`
  height: 17px;
  padding: 0 5px 0 6px;
  display: flex;
  align-items: center;
  gap: 2px;
  color: #73777e;

  > button {
    width: 11px;
  }
`;

const SearchBox = styled.div`
  flex: 1;
  min-width: 0;
  height: 17px;
  display: flex;
  background: #fff;
  border: 1px solid #bcbec8;

  input {
    flex: 1;
    min-width: 0;
  }

  button {
    width: 14px;
  }
`;

const Tree = styled.ul`
  margin: 4px 0 0;
  padding: 0;
  list-style: none;
  color: #41464d;
`;

const TreeRoot = styled.li`
  height: 12px;
  padding-left: 6px;
  display: flex;
  align-items: center;
  gap: 3px;
`;

const TreeItem = styled.li`
  height: 12px;
  margin-left: 8px;
  display: flex;
  align-items: center;
  gap: 3px;

  i {
    width: 7px;
    font-style: normal;
    font-size: 8px;
  }
`;

const InsertLine = styled.div`
  flex: none;
  height: 2px;
  margin: 3px 4px 0 6px;
  background: #8fd070;
`;

const Canvas = styled.section`
  position: relative;
  flex: 1;
  background: linear-gradient(#005a96 0%, #004c86 25%, #003263 55%, #001638 82%, #000a2a 100%);
`;

const Sheet = styled.div`
  position: absolute;
  left: 149px;
  top: 14px;
  background: #fff;
  box-shadow: 0 0 0 1px #1d5fae;
`;

const SpringSvg = styled.svg`
  display: block;
  width: 214px;
  height: 520px;
`;

const PlaneSvg = styled.svg`
  position: absolute;
  left: 364px;
  top: 165px;
`;

const SceneTools = styled.div`
  position: absolute;
  left: 371px;
  top: 4px;
  height: 18px;
  padding: 0 4px;
  display: flex;
  align-items: center;
  gap: 4px;
  background: #fbfafe;
`;

const StatusBar = styled.footer`
  height: 39px;
  display: flex;
  border-top: 1px solid #d5d6de;
`;

const StatusTools = styled.div`
  width: 53px;
  display: flex;
  align-items: flex-end;
  justify-content: space-between;
  padding: 0 0 3px 3px;
`;

const StatusToggle = styled.button<{ $on?: boolean }>`
  width: 14px;
  height: 15px;
  background: ${({ $on }) => ($on ? "#dcdde4" : "transparent")};
`;

const Messages = styled.div`
  flex: 1;
  padding-top: 4px;
  font-size: 7px;
  font-feature-settings: "halt";

  p {
    margin: 0;
    height: 11px;
    display: flex;
    align-items: center;
  }

  em {
    width: 8px;
    text-align: center;
    font-style: normal;
    color: #1a4f9c;
  }
`;

const StatusRight = styled.div`
  width: 247px;
  display: flex;
  align-items: center;
  align-self: flex-end;
  gap: 4px;
  padding: 0 11px 2px 0;

  button {
    gap: 3px;
  }
`;

const Taskbar = styled.footer`
  height: 30px;
  display: flex;
  align-items: center;
  background: linear-gradient(90deg, #d6dde9 0%, #d8dfeb 50%, #cfdbe6 75%, #cfe8ee 90%, #d8e4ee 100%);
`;

const StartButton = styled.button`
  width: 36px;
  height: 30px;
  padding-left: 4px;
`;

const Badge = styled.div`
  width: 107px;
  height: 30px;
  padding-left: 3px;
  display: flex;
  align-items: center;
  background: #fff;
  color: #111;

  div {
    display: flex;
    flex-direction: column;
  }

  strong {
    font-size: 16px;
    font-weight: 700;
    line-height: 17px;
  }

  small {
    padding-left: 3px;
    font-family: "DejaVu Sans", sans-serif;
    font-size: 9px;
    line-height: 10px;
    white-space: nowrap;
  }
`;

const WordButton = styled.button`
  width: 30px;
  height: 30px;
`;

const Tray = styled.div`
  display: flex;
  align-items: center;
  gap: 12px;
  padding-right: 12px;
  font-size: 10px;
  color: #2a323a;
`;

const TrayPair = styled.button`
  gap: 3px;
`;

const Clock = styled.div`
  display: flex;
  flex-direction: column;
  align-items: flex-end;
  margin: 0 -8px 0 -6px;
  font-size: 8px;
  line-height: 10px;
`;

const Dialog = styled.div`
  position: absolute;
  left: 595px;
  top: 0;
  width: 397px;
  background: #f0eff4;
  border: 1px solid #a6a8b3;
  box-shadow: 0 1px 5px rgba(0, 0, 0, 0.3);
`;

const DialogTitle = styled.div`
  height: 17px;
  padding: 0 6px 0 32px;
  display: flex;
  align-items: center;
  background: #e9e9ee;
  color: #a0a1a9;

  > span {
    flex: 1;
    padding-left: 5px;
    text-align: center;
  }
`;

const MenuBar = styled.div`
  height: 20px;
  padding-left: 5px;
  display: flex;
  align-items: center;
  gap: 11px;
  border-bottom: 1px solid #d6d7de;
  color: #b4b5bd;
`;

const DialogBody = styled.div`
  padding: 10px 7px 8px 5px;
`;

const Scope = styled.fieldset`
  min-width: 0;
  margin: 0;
  padding: 4px 5px 6px 6px;
  border: 1px solid #d9dae1;

  legend {
    padding: 0 3px;
    line-height: 10px;
  }
`;

const SelectBox = styled.div<{ $w?: number }>`
  flex: ${({ $w }) => ($w ? `0 0 ${$w}px` : "1")};
  height: 15px;
  display: flex;
  align-items: center;
  padding-left: 3px;
  background: #fff;
  border: 1px solid #c1c2cc;

  select {
    flex: 1;
    min-width: 0;
    height: 13px;
    appearance: none;
    outline: none;
  }
`;

const SelectArrow = styled.span`
  width: 10px;
  height: 13px;
  display: flex;
  align-items: center;
  justify-content: center;
  border-left: 1px solid #c1c2cc;
`;

const IconButton = styled.button<{ $off?: boolean }>`
  width: 18px;
  height: 17px;
  background: ${({ $off }) => ($off ? "#ebebf0" : "#fdfdff")};
  border: 1px solid ${({ $off }) => ($off ? "#dcdde3" : "#c9cad3")};
`;

const SectionTitle = styled.h2`
  margin: 7px 0 0;
  padding-left: 3px;
  height: 12px;
  display: flex;
  align-items: center;
  gap: 4px;
  font-size: 8px;
  font-weight: 500;
`;

const EditorTools = styled.div`
  height: 18px;
  display: flex;
  align-items: center;
`;

const ToolButton = styled.button<{ $wide?: boolean }>`
  width: ${({ $wide }) => ($wide ? 28 : 20)}px;
  height: 18px;
  gap: 3px;

  b, i {
    font-size: 10px;
    font-weight: 600;
  }
`;

const Editor = styled.div`
  display: flex;

  textarea {
    flex: 1;
    height: 223px;
    padding: 2px;
    resize: none;
    outline: none;
    background: #fff;
    border: 1px solid #c6c7d0;
  }
`;

const Operators = styled.div`
  width: 12px;
  display: flex;
  flex-direction: column;

  button {
    height: 13px;
    font-size: 7px;
  }
`;

const InitialRow = styled.div`
  display: flex;
  justify-content: flex-end;
  padding: 0 1px 2px 0;
  border-bottom: 1px solid #d3d4dd;

  & + ${SectionTitle} {
    margin-top: 3px;
  }
`;

const ParamBox = styled.div`
  padding: 1px 4px 4px;
  border: 1px solid #d9dae1;
`;

const FilterRow = styled.div`
  display: flex;
  align-items: center;
  gap: 2px;
`;

const TableArea = styled.div`
  display: flex;
  margin-top: 1px;
`;

const TableColumn = styled.div`
  flex: 1;
  min-width: 0;
`;

const TableRow = styled.div`
  display: flex;
`;

const ParamTable = styled.table`
  flex: 1;
  width: 100%;
  min-width: 0;
  table-layout: fixed;
  border-collapse: separate;
  border-spacing: 0;
  background: #fff;

  th, td {
    overflow: hidden;
    padding: 0 0 0 2px;
    text-align: left;
    white-space: nowrap;
    line-height: 12px;
    border-right: 1px solid #ececf1;
  }

  th {
    height: 13px;
    padding-left: 5px;
    font-weight: 500;
    background: #fafafd;
  }

  td {
    height: 15px;
    border-bottom: 1px solid #ececf1;
    color: #7d8087;
  }

  td:first-child, th:first-child {
    padding: 0;
    background: #dcdce1;
    border: 0;
  }
`;

const Param = styled.tr<{ $selected?: boolean }>`
  && td:nth-child(2) {
    background: ${({ $selected }) => ($selected ? "#aee3fa" : "transparent")};
    color: ${({ $selected }) => ($selected ? "#33383e" : "#7d8087")};
  }

  && td:first-child {
    background: ${({ $selected }) => ($selected ? "#b3afba" : "#dcdce1")};
  }
`;

const Strong = styled.td`
  && {
    color: #23272b;
    font-weight: 500;
  }
`;

const Access = styled.span`
  display: flex;
  align-items: center;
  white-space: nowrap;
`;

const Centered = styled.td`
  && {
    padding: 0;
    text-align: center;
  }

  input {
    display: block;
    width: 8px;
    height: 8px;
    margin: 0 auto;
    appearance: none;
    background: #fff;
    border: 1px solid #85888f;
  }
`;

const ScrollCap = styled.span`
  flex: none;
  width: 8px;
  height: 8px;
  display: flex;
  align-items: center;
  justify-content: center;
  background: #fbfbfd;
  font-size: 7px;
  color: #777b83;
`;

const VScroll = styled.div`
  flex: 0 0 9px;
  padding-top: 14px;
  display: flex;
  flex-direction: column;
  background: #dfdfe5;
`;

const VThumb = styled.div`
  flex: 1;
  margin-top: 110px;
  background: #fafafd;
  border: 1px solid #d0d1d9;
`;

const HScroll = styled.div`
  height: 9px;
  padding: 0 9px 0 9px;
  display: flex;
  background: #dfdfe5;
`;

const HThumb = styled.div`
  flex: 1;
  margin-right: 70px;
  background: #fafafd;
  border: 1px solid #d0d1d9;
`;

const MoveButtons = styled.div`
  width: 14px;
  display: flex;
  flex-direction: column;
  align-items: center;
  justify-content: center;
  gap: 4px;
`;

const PushButton = styled.button<{ $off?: boolean }>`
  width: ${({ $off }) => ($off ? 33 : 36)}px;
  height: 16px;
  background: ${({ $off }) => ($off ? "#e9e9ee" : "#fdfdff")};
  border: 1px solid #c6c7d0;
  color: ${({ $off }) => ($off ? "#b3b4bc" : "inherit")};
`;

const ParamFooter = styled.div`
  display: flex;
  align-items: center;
  gap: 2px;
  margin-top: 1px;
`;

const DialogFooter = styled.div`
  display: flex;
  gap: 4px;
  padding: 6px 7px 6px 5px;
  border-top: 1px solid #d6d7de;
`;

const Watermark = styled.div`
  position: absolute;
  right: 22px;
  top: 22px;
  display: flex;
  align-items: center;
  gap: 8px;
  font-size: 25px;
  line-height: 56px;
  color: rgba(255, 255, 255, 0.8);
  text-shadow: 0 0 2px rgba(190, 190, 200, 0.3);
  pointer-events: none;

  svg {
    margin-bottom: 9px;
  }
`;
